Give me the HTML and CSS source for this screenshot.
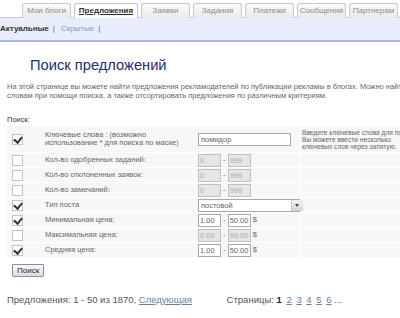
FILE: index.html
```html
<!DOCTYPE html>
<html lang="ru">
<head>
    <meta charset="UTF-8">
    <title>Поиск предложений</title>
    <link rel="stylesheet" href="styles.css">
</head>
<body>
    <!-- Top tabs -->
    <div class="tabs">
        <a class="tab">Мои блоги</a>
        <a class="tab active">Предложения</a>
        <a class="tab">Заявки</a>
        <a class="tab">Задания</a>
        <a class="tab">Платежи</a>
        <a class="tab">Сообщения</a>
        <a class="tab">Партнерам</a>
    </div>
    <div class="subnav">
        <b>Актуальные</b><span class="sep">|</span><a>Скрытые</a><span class="sep">|</span>
    </div>

    <div class="content">
        <h1>Поиск предложений</h1>
        <p class="intro">На этой странице вы можете найти предложения рекламодателей по публикации рекламы в блогах. Можно найти предложения по ключевым<br>словам при помощи поиска, а также отсортировать предложения по различным критериям.</p>

        <form>
            <div class="form-title">Поиск:</div>
            <table class="search">
                <tr class="tall">
                    <td class="chk"><span class="box on"></span></td>
                    <td class="lbl">Ключевые слова : (возможно<br>использование * для поиска по маске)</td>
                    <td class="fld"><input class="text" type="text" value="помидор"></td>
                    <td class="hint">Введите ключевые слова для поиска.<br>Вы можете ввести несколько<br>ключевых слов через запятую.</td>
                </tr>
                <tr>
                    <td class="chk"><span class="box"></span></td>
                    <td class="lbl">Кол-во одобренных заданий:</td>
                    <td class="fld"><input class="num" value="0" disabled> - <input class="num" value="999" disabled></td>
                    <td class="hint"></td>
                </tr>
                <tr>
                    <td class="chk"><span class="box"></span></td>
                    <td class="lbl">Кол-во отклоненных заявок:</td>
                    <td class="fld"><input class="num" value="0" disabled> - <input class="num" value="999" disabled></td>
                    <td class="hint"></td>
                </tr>
                <tr>
                    <td class="chk"><span class="box"></span></td>
                    <td class="lbl">Кол-во замечаний:</td>
                    <td class="fld"><input class="num" value="0" disabled> - <input class="num" value="999" disabled></td>
                    <td class="hint"></td>
                </tr>
                <tr>
                    <td class="chk"><span class="box on"></span></td>
                    <td class="lbl">Тип поста</td>
                    <td class="fld"><span class="select">постовой<span class="arrow"></span></span></td>
                    <td class="hint"></td>
                </tr>
                <tr>
                    <td class="chk"><span class="box on"></span></td>
                    <td class="lbl">Минимальная цена:</td>
                    <td class="fld"><input class="num" value="1.00"> - <input class="num" value="50.00"> $</td>
                    <td class="hint"></td>
                </tr>
                <tr>
                    <td class="chk"><span class="box"></span></td>
                    <td class="lbl">Максимальная цена:</td>
                    <td class="fld"><input class="num" value="0.00" disabled> - <input class="num" value="99.00" disabled> $</td>
                    <td class="hint"></td>
                </tr>
                <tr>
                    <td class="chk"><span class="box on"></span></td>
                    <td class="lbl">Средняя цена:</td>
                    <td class="fld"><input class="num" value="1.00"> - <input class="num" value="50.00"> $</td>
                    <td class="hint"></td>
                </tr>
            </table>
            <button type="button" class="btn">Поиск</button>
        </form>

        <div class="pager">
            <span class="count">Предложения: 1 - 50 из 1870, <a>Следующая</a></span>
            <span class="pages">Страницы: <b>1</b> <a>2</a> <a>3</a> <a>4</a> <a>5</a> <a>6</a> ...</span>
        </div>
    </div>
</body>
</html>
```

FILE: styles.css
```css
/* General styles */
html, body {
    overflow: hidden;
}

body {
    margin: 0;
    width: 560px;
    font-family: "Liberation Sans", Arial, sans-serif;
    font-size: 7.5px;
    color: #666;
    background: #fff;
}

/* Tabs */
.tabs {
    display: flex;
    gap: 3px;
    padding: 3px 0 0 22px;
    height: 14px;
}

.tab {
    width: 47px;
    height: 14px;
    line-height: 14px;
    text-align: center;
    font-size: 8px;
    color: #8a8a8a;
    border: 1px solid #c9c9c9;
    border-bottom: none;
    border-radius: 3px 3px 0 0;
    background: linear-gradient(#fbfbfb, #e9e9e9);
}

.tab.active {
    width: 62px;
    color: #333;
    text-decoration: underline;
    font-weight: bold;
    border-color: #b7c4e6;
    background: #fff;
}

.subnav {
    height: 22px;
    line-height: 22px;
    font-size: 8px;
    background: #e8edfb;
    border-top: 1px solid #c3cdea;
    border-bottom: 2px solid #a9b8e2;
    color: #333;
}

.subnav a {
    color: #8a98b8;
}

.subnav .sep {
    color: #666;
    margin: 0 6px 0 4px;
}

/* Content */
.content {
    padding: 0 7px;
}

h1 {
    margin: 15px 0 0 23px;
    font-size: 14.7px;
    font-weight: normal;
    color: #1f2d6c;
}

.intro {
    margin: 9px 0 0;
    font-size: 7.5px;
    line-height: 9px;
}

.form-title {
    margin-top: 15px;
    color: #333;
}

/* Search table */
.search {
    margin-top: 1px;
    border-collapse: separate;
    border-spacing: 0 1px;
    table-layout: fixed;
    width: 453px;
}

.search td {
    background: #f7f7f7;
    height: 14px;
    padding: 0;
    vertical-align: middle;
}

.search tr.tall td {
    height: 26px;
}

.search td.chk {
    width: 33px;
    padding-left: 5px;
}

.search td.lbl {
    width: 153px;
    line-height: 8px;
}

.search td.fld {
    width: 102px;
}

.search td.hint {
    width: 159px;
    padding-left: 1px;
    font-size: 6.6px;
    line-height: 7px;
    white-space: nowrap;
    border-left: 1px solid #fff;
}

.box {
    display: block;
    width: 9px;
    height: 9px;
    border: 1px solid #c4c4c4;
    background: #fff;
    position: relative;
}

.box.on::after {
    content: "";
    position: absolute;
    left: 2px;
    top: 0;
    width: 4px;
    height: 6px;
    border-right: 2px solid #333;
    border-bottom: 2px solid #333;
    transform: rotate(40deg);
}

input {
    font-family: inherit;
    font-size: 7.5px;
    color: #666;
    border: 1px solid #a8a8a8;
    height: 13px;
    padding: 0 1px;
    box-sizing: border-box;
    vertical-align: middle;
    background: #fff;
}

input.text {
    width: 93px;
    padding: 0 2px;
}

input.num {
    width: 23px;
}

input:disabled {
    background: #e6e6e6;
    border-color: #c0c0c0;
    color: #aaa;
}

.select {
    display: flex;
    align-items: center;
    width: 106px;
    height: 13px;
    box-sizing: border-box;
    border: 1px solid #a8a8a8;
    padding-left: 2px;
    background: #fff;
}

.select .arrow {
    margin-left: auto;
    width: 11px;
    height: 11px;
    background: linear-gradient(#f2f2f2, #d4d4d4);
    border-left: 1px solid #ccc;
    position: relative;
}

.select .arrow::after {
    content: "";
    position: absolute;
    left: 3px;
    top: 4px;
    border-left: 2px solid transparent;
    border-right: 2px solid transparent;
    border-top: 3px solid #444;
}

.btn {
    margin: 6px 0 0 5px;
    height: 13px;
    padding: 0 4px;
    font-family: inherit;
    font-size: 8px;
    color: #223;
    border: 1px solid #7f90b6;
    border-radius: 1px;
    background: linear-gradient(#fafafa, #dcdcdc);
}

/* Pager */
.pager {
    margin-top: 17px;
    font-size: 9.5px;
    color: #555;
}

.pager a {
    color: #6680a8;
    text-decoration: underline;
}

.pages {
    margin-left: 32px;
}

.pages b {
    color: #222;
}

.pages a {
    margin-left: 2px;
}
```
